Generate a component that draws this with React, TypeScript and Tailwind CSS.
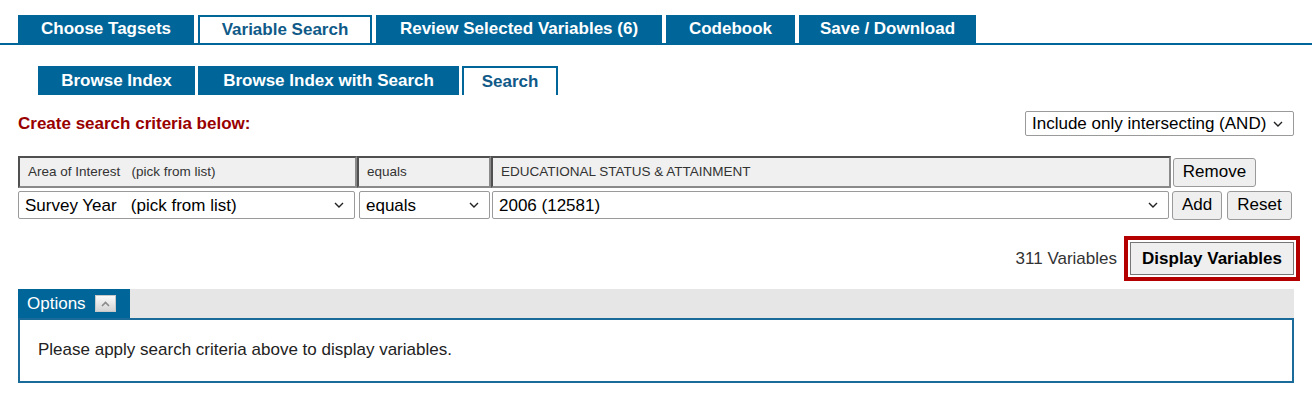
import React from 'react';

const BLUE = 'bg-[#00669a]';

const Chevron: React.FC = () => (
    <svg width="10" height="6" viewBox="0 0 10 6" className="shrink-0">
        <path d="M1 1l4 4 4-4" fill="none" stroke="#222" strokeWidth="1.4" />
    </svg>
);

const FakeSelect: React.FC<{ label: string; className?: string }> = ({ label, className = '' }) => (
    <div className={`flex items-center justify-between border border-[#9a9a9a] rounded-[2px] bg-white pl-[6px] pr-[10px] text-[17px] text-black ${className}`}>
        <span className="whitespace-pre leading-none">{label}</span>
        <Chevron />
    </div>
);

const Btn: React.FC<{ children: React.ReactNode; className?: string }> = ({ children, className = '' }) => (
    <button className={`flex items-center justify-center bg-[#efefef] border border-[#9a9a9a] rounded-[3px] text-[17px] text-black ${className}`}>
        {children}
    </button>
);

const mainTabs = [
    { label: 'Choose Tagsets', w: 'w-[176px]' },
    { label: 'Variable Search', w: 'w-[174px]', active: true },
    { label: 'Review Selected Variables (6)', w: 'w-[286px]' },
    { label: 'Codebook', w: 'w-[129px]' },
    { label: 'Save / Download', w: 'w-[177px]' },
];

const subTabs = [
    { label: 'Browse Index', w: 'w-[157px]' },
    { label: 'Browse Index with Search', w: 'w-[261px]' },
    { label: 'Search', w: 'w-[96px]', active: true },
];

const HeaderCell: React.FC<{ label: string; w: string }> = ({ label, w }) => (
    <div className={`${w} h-[32px] flex items-center pl-[8px] pt-[1px] bg-[#f0f0f0] border-2 border-t-[#505050] border-l-[#505050] border-b-[#8a8a8a] border-r-[#8a8a8a] text-[13.5px] text-[#333] whitespace-pre`}>
        {label}
    </div>
);

export default function App() {
    return (
        <div className="w-[1312px] h-[402px] bg-white font-['Liberation_Sans',Arial,sans-serif] text-[#222]">
            {/* main tabs */}
            <div className="pt-[15px] pl-[18px] flex gap-[4px] border-b-2 border-[#00669a]">
                {mainTabs.map(t => (
                    <div
                        key={t.label}
                        className={`${t.w} h-[28px] flex items-center justify-center text-[17px] font-bold ${t.active ? 'bg-white border-2 border-b-0 border-[#00669a] text-[#0f5a88]' : `${BLUE} text-white`}`}
                    >
                        {t.label}
                    </div>
                ))}
            </div>

            {/* sub tabs */}
            <div className="mt-[21px] pl-[38px] flex gap-[3px]">
                {subTabs.map(t => (
                    <div
                        key={t.label}
                        className={`${t.w} h-[29px] flex items-center justify-center text-[17px] font-bold ${t.active ? 'bg-white border-2 border-b-0 border-[#00669a] text-[#0f5a88]' : `${BLUE} text-white`}`}
                    >
                        {t.label}
                    </div>
                ))}
            </div>

            {/* criteria title */}
            <div className="mt-[16px] px-[18px] flex items-center justify-between">
                <div className="text-[17px] font-bold text-[#990000]">Create search criteria below:</div>
                <FakeSelect label="Include only intersecting (AND)" className="w-[269px] h-[25px] pr-[6px]" />
            </div>

            {/* criteria table */}
            <div className="mt-[19px] px-[18px]">
                <div className="flex items-start">
                    <HeaderCell label="Area of Interest   (pick from list)" w="w-[339px]" />
                    <HeaderCell label="equals" w="w-[134px]" />
                    <HeaderCell label="EDUCATIONAL STATUS & ATTAINMENT" w="w-[680px]" />
                    <Btn className="ml-[2px] mt-[2px] w-[83px] h-[29px]">Remove</Btn>
                </div>
                <div className="mt-[3px] flex items-center">
                    <FakeSelect label="Survey Year   (pick from list)" className="w-[337px] h-[28px]" />
                    <FakeSelect label="equals" className="ml-[4px] w-[131px] h-[28px]" />
                    <FakeSelect label="2006 (12581)" className="ml-[2px] w-[677px] h-[28px]" />
                    <Btn className="ml-[3px] w-[50px] h-[29px]">Add</Btn>
                    <Btn className="ml-[5px] w-[65px] h-[29px]">Reset</Btn>
                </div>
            </div>

            {/* count + display */}
            <div className="mt-[22px] px-[18px] flex items-center justify-end gap-[13px]">
                <span className="text-[17px] text-[#333] pt-[1px]">311 Variables</span>
                <button className="w-[164px] h-[33px] pt-[1px] bg-[#efefef] border border-[#767676] rounded-none text-[17px] font-bold text-black outline-4 outline-solid outline-[#b50000] outline-offset-2">
                    Display Variables
                </button>
            </div>

            {/* options panel */}
            <div className="mt-[14px] mx-[18px]">
                <div className="h-[29px] bg-[#e6e6e6] flex">
                    <div className={`${BLUE} w-[112px] flex items-center pl-[9px] gap-[9px] pt-[1px]`}>
                        <span className="text-[17px] text-white">Options</span>
                        <span className="w-[21px] h-[17px] flex items-center justify-center bg-gradient-to-b from-[#fafafa] to-[#d4d4d4] border border-[#c8c8c8]">
                            <svg width="9" height="6" viewBox="0 0 9 6">
                                <path d="M1 5l3.5-3.5L8 5" fill="none" stroke="#8a8a8a" strokeWidth="1.6" />
                            </svg>
                        </span>
                    </div>
                </div>
                <div className="h-[65px] border-2 border-[#1a6a9a] flex items-center pl-[18px] text-[17px] text-[#222]">
                    Please apply search criteria above to display variables.
                </div>
            </div>
        </div>
    );
}
